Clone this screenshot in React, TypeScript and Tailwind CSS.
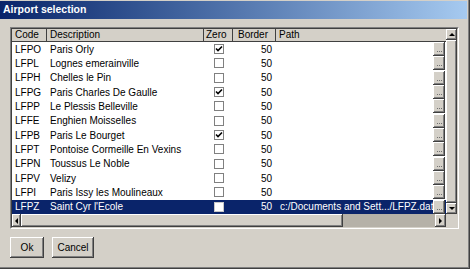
const airports: [string, string, boolean][] = [
  ["LFPO", "Paris Orly", true],
  ["LFPL", "Lognes emerainville", false],
  ["LFPH", "Chelles le Pin", false],
  ["LFPG", "Paris Charles De Gaulle", true],
  ["LFPP", "Le Plessis Belleville", false],
  ["LFFE", "Enghien Moisselles", false],
  ["LFPB", "Paris Le Bourget", true],
  ["LFPT", "Pontoise Cormeille En Vexins", false],
  ["LFPN", "Toussus Le Noble", false],
  ["LFPV", "Velizy", false],
  ["LFPI", "Paris Issy les Moulineaux", false],
  ["LFPZ", "Saint Cyr l'Ecole", false],
];

const raised =
  "shadow-[inset_-1px_-1px_#404040,inset_1px_1px_#ffffff,inset_-2px_-2px_#808080]";

const Check = ({ on, selected }: { on: boolean; selected: boolean }) => (
  <span
    className={`flex h-[10px] w-[10px] items-center justify-center border ${
      selected ? "border-[#c8c8c8] bg-white" : "border-[#808080] bg-white"
    }`}
  >
    {on && (
      <svg width="8" height="8" viewBox="0 0 8 8">
        <path d="M1 3.5 L3 5.5 L7 1.5" stroke="#000" strokeWidth="1.6" fill="none" />
      </svg>
    )}
  </span>
);

const Arrow = ({ dir }: { dir: "up" | "down" | "left" | "right" }) => {
  const pts = {
    up: "1,5 4,2 7,5",
    down: "1,2 4,5 7,2",
    left: "5,1 2,4 5,7",
    right: "2,1 5,4 2,7",
  }[dir];
  return (
    <svg width="8" height="8" viewBox="0 0 8 8">
      <polygon points={pts} fill="#000" />
    </svg>
  );
};

const Dots = () => (
  <span
    className={`mr-[1px] flex h-[14px] w-[12px] shrink-0 items-end justify-center gap-[1px] bg-[#d4d0c8] pb-[4px] ${raised}`}
  >
    <span className="h-[1px] w-[1px] bg-[#707070]" />
    <span className="h-[1px] w-[1px] bg-[#707070]" />
    <span className="h-[1px] w-[1px] bg-[#707070]" />
  </span>
);

export default function App() {
  return (
    <div
      className="flex h-[269px] w-[470px] flex-col bg-[#d4d0c8] text-[10px] text-black shadow-[inset_-1px_-1px_#404040,inset_-2px_-2px_#808080]"
      style={{ fontFamily: '"Liberation Sans", Arial, sans-serif' }}
    >
      {/* title bar */}
      <div className="mt-[1px] mr-[3px] flex h-[18px] items-center bg-gradient-to-r from-[#0a246a] to-[#a6caf0] pl-[3px] text-[10.5px] font-bold text-white">
        Airport selection
      </div>

      {/* table frame */}
      <div className="ml-[10px] mt-[8px] flex h-[202px] w-[449px] flex-col border border-t-[#808080] border-l-[#808080] border-b-white border-r-white">
        <div className="flex flex-1 flex-col border border-t-[#404040] border-l-[#404040] border-b-[#d4d0c8] border-r-[#d4d0c8]">
          <div className="flex flex-1 min-h-0">
            <div className="flex flex-1 flex-col bg-white">
              {/* header */}
              <div className="flex h-[13px] bg-[#d4d0c8] leading-[12px]">
                <div className="w-[35px] border-r border-b border-[#404040] pl-[3px]">Code</div>
                <div className="w-[157px] border-r border-b border-[#404040] pl-[3px]">Description</div>
                <div className="w-[29px] border-r border-b border-[#404040] pl-[2px]">Zero</div>
                <div className="w-[43px] border-r border-b border-[#404040] pl-[5px]">Border</div>
                <div className="flex-1 border-b border-[#404040] pl-[3px]">Path</div>
              </div>
              {airports.map(([code, name, on], i) => {
                const sel = i === airports.length - 1;
                return (
                  <div
                    key={code}
                    className={`flex h-[14.33px] items-center ${
                      sel ? "bg-[#0a246a] text-white" : ""
                    }`}
                  >
                    <div className="w-[35px] pl-[3px]">{code}</div>
                    <div className="w-[157px] pl-[3px]">{name}</div>
                    <div className="flex w-[29px] justify-center pl-[1px]">
                      <Check on={on} selected={sel} />
                    </div>
                    <div className="w-[43px] pr-[4px] text-right">50</div>
                    <div className="flex min-w-0 flex-1 items-center overflow-hidden pl-[4px]">
                      <span className="whitespace-nowrap">
                        {sel ? "c:/Documents and Sett.../LFPZ.dat" : ""}
                      </span>
                    </div>
                    <Dots />
                  </div>
                );
              })}
            </div>
            {/* vertical scrollbar */}
            <div className="flex w-[14px] flex-col bg-[#e4e1db]">
              <div className={`flex h-[11px] items-center justify-center bg-[#d4d0c8] ${raised}`}>
                <Arrow dir="up" />
              </div>
              <div className={`flex-1 bg-[#d4d0c8] ${raised}`} />
              <div className={`flex h-[11px] items-center justify-center bg-[#d4d0c8] ${raised}`}>
                <Arrow dir="down" />
              </div>
            </div>
          </div>
          {/* horizontal scrollbar */}
          <div className="flex h-[13px]">
            <div className={`flex w-[9px] items-center justify-center bg-[#d4d0c8] ${raised}`}>
              <Arrow dir="left" />
            </div>
            <div className={`w-[322px] bg-[#d4d0c8] ${raised}`} />
            <div className="flex-1 bg-[#b5b1a8]" />
            <div className={`flex w-[11px] items-center justify-center bg-[#d4d0c8] ${raised}`}>
              <Arrow dir="right" />
            </div>
            <div className="w-[11px] bg-[#d4d0c8]" />
          </div>
        </div>
      </div>

      {/* buttons */}
      <div className="ml-[10px] mt-[8px] flex gap-[8px]">
        <button className={`h-[21px] w-[34px] bg-[#d4d0c8] text-[10px] ${raised}`}>Ok</button>
        <button className={`h-[21px] w-[42px] bg-[#d4d0c8] text-[10px] ${raised}`}>Cancel</button>
      </div>
    </div>
  );
}
